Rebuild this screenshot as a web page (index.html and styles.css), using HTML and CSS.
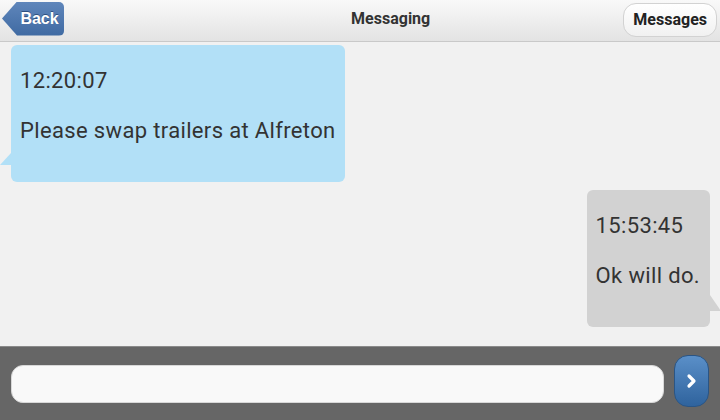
FILE: index.html
```html
<!DOCTYPE html>
<html lang="en">
<head>
  <meta charset="UTF-8">
  <meta name="viewport" content="width=device-width, initial-scale=1.0">
  <title>Messaging</title>
  <link rel="stylesheet" href="styles.css">
</head>
<body>

<div id="app">
  <div id="header">
    <div class="back-btn">Back</div>
    <div class="title">Messaging</div>
    <div class="msgs-btn">Messages</div>
  </div>

  <div id="messages">
    <div class="bubble incoming">
      <p>12:20:07</p>
      <p>Please swap trailers at Alfreton</p>
    </div>
    <div class="bubble outgoing">
      <p>15:53:45</p>
      <p>Ok will do.</p>
    </div>
  </div>

  <div id="footer">
    <div class="text-input"></div>
    <div class="send-btn">
      <svg width="14" height="16" viewBox="0 0 14 16">
        <path d="M4 3 L9 8 L4 13" fill="none" stroke="#fff" stroke-width="3.2" stroke-linecap="round" stroke-linejoin="round"/>
      </svg>
    </div>
  </div>
</div>

</body>
</html>
```

FILE: styles.css
```css
body {
  margin: 0;
  font-family: Roboto, "Liberation Sans", sans-serif;
  background-color: #f1f1f1;
}
#app {
  display: flex;
  flex-direction: column;
  height: 420px;
  overflow: hidden;
}
#header {
  height: 41px;
  display: flex;
  align-items: center;
  padding: 0 3px 0 2px;
  background: linear-gradient(#f9f9f9, #e3e3e3);
  border-bottom: 1px solid #c9c9c9;
}
.back-btn {
  width: 62px;
  height: 34px;
  margin-top: -4px;
  box-sizing: border-box;
  padding-left: 13px;
  display: flex;
  align-items: center;
  justify-content: center;
  background: linear-gradient(#5f86bb, #3f6aa2);
  color: #fff;
  font-family: "Liberation Sans", Arial, sans-serif;
  font-weight: bold;
  font-size: 16px;
  border-radius: 0 5px 5px 0;
  clip-path: polygon(0 50%, 15px 0, 100% 0, 100% 100%, 15px 100%);
  text-shadow: 0 -1px 0 #2f5080;
}
.title {
  flex: 1;
  padding-left: 94px;
  margin-top: -5px;
  text-align: center;
  font-weight: bold;
  font-size: 16px;
  color: #333;
}
.msgs-btn {
  height: 34px;
  margin-top: -2px;
  box-sizing: border-box;
  padding: 0 9px;
  display: flex;
  align-items: center;
  background: linear-gradient(#ffffff, #f1f1f1);
  border: 1px solid #d2d2d2;
  border-radius: 13px;
  font-weight: bold;
  font-size: 16px;
  color: #222;
}
#messages {
  flex: 1;
  display: flex;
  flex-direction: column;
  gap: 8px;
  padding-top: 3px;
}
.bubble {
  position: relative;
  border-radius: 6px;
  padding: 23px 9px 38px;
  font-size: 22px;
  letter-spacing: 0.35px;
  color: #333;
}
.bubble p {
  margin: 0;
  line-height: 26px;
}
.bubble p + p {
  margin-top: 24px;
}
.incoming {
  align-self: flex-start;
  margin-left: 11px;
  background-color: #b2e0f7;
}
.incoming::before {
  content: "";
  position: absolute;
  left: -11px;
  bottom: 17px;
  width: 0;
  height: 0;
  border-right: 11px solid #b2e0f7;
  border-top: 12px solid transparent;
}
.outgoing {
  align-self: flex-end;
  margin-right: 10px;
  padding-right: 10px;
  background-color: #d2d2d2;
}
.outgoing::after {
  content: "";
  position: absolute;
  right: -11px;
  bottom: 16px;
  width: 0;
  height: 0;
  border-left: 11px solid #d2d2d2;
  border-top: 16px solid transparent;
}
#footer {
  height: 73px;
  display: flex;
  align-items: center;
  gap: 10px;
  padding: 0 11px 0 11px;
  background-color: #666;
  border-top: 1px solid #8a8a8a;
}
.text-input {
  flex: 1;
  height: 38px;
  box-sizing: border-box;
  background-color: #f9f9f9;
  border: 1px solid #d8d8d8;
  border-radius: 12px;
}
.send-btn {
  width: 35px;
  height: 52px;
  margin-top: -6px;
  box-sizing: border-box;
  display: flex;
  align-items: center;
  justify-content: center;
  background: linear-gradient(#5a8fc8, #2f639d);
  border: 1px solid #2a5585;
  border-radius: 14px;
}
```
